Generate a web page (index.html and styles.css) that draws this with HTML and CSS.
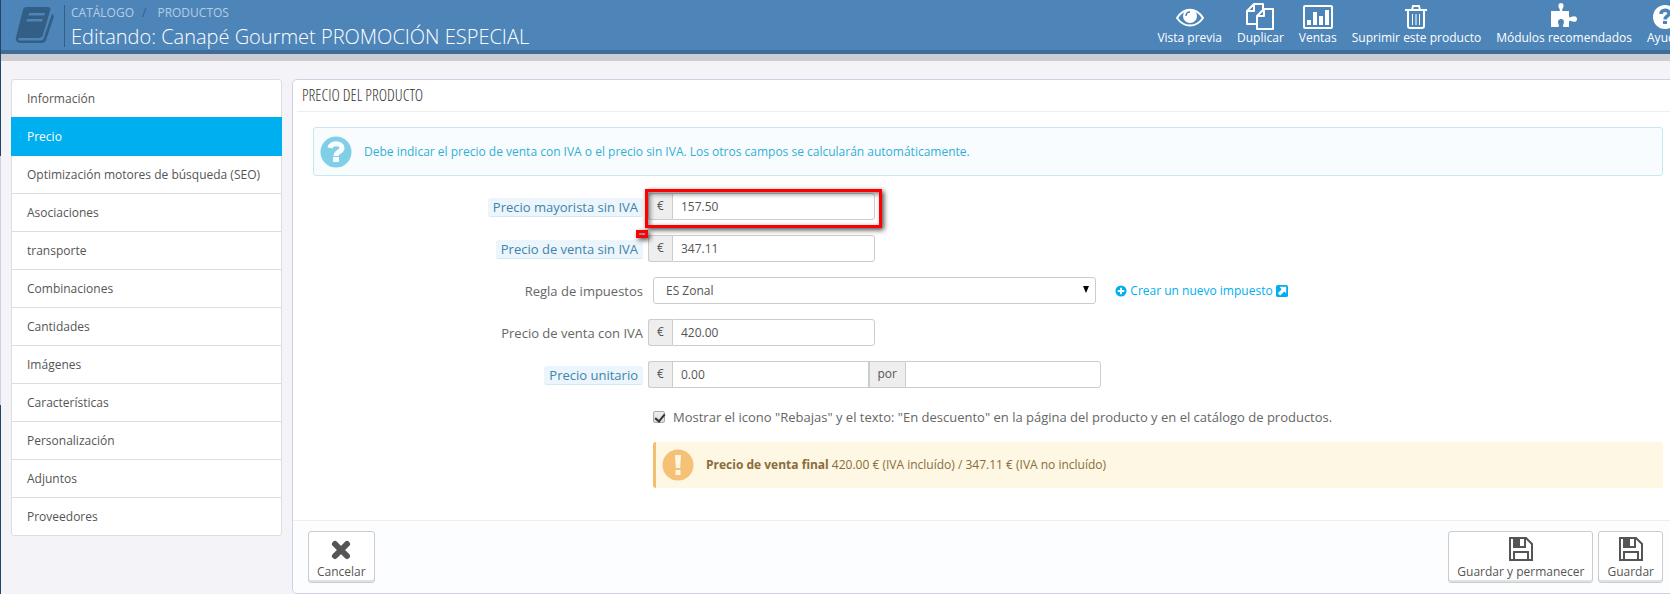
FILE: index.html
```
<!DOCTYPE html>
<html lang="es">
<head>
    <meta charset="UTF-8">
    <meta name="viewport" content="width=device-width, initial-scale=1.0">
    <title>Editando: Canapé Gourmet PROMOCIÓN ESPECIAL</title>
    <link rel="stylesheet" href="styles.css">
</head>
<body>
    <!-- Borde del menú principal -->
    <div class="nav-edge"></div>

    <div class="page">
        <header class="page-head">
            <svg class="page-icon" viewBox="0 0 37 38" preserveAspectRatio="none"><path fill="#335f87" fill-rule="evenodd" d="M11 1h20c2 0 3 1 2.500 3l-7 25c-.5 2-2 3-4 3H5c-2 0-2.500 2-1 2.500h20c2 0 3-1 3.500-3L35 8c2 1 2 2 1.500 4l-7 22c-.8 2-2 3-4 3H5c-3 0-5-3-4-6L7.500 4C8 2 9 1 11 1zm2.500 6l-.8 2.500h15l.8-2.500zm-2 6l-.8 2.500h15l.8-2.500z"/></svg>
            <div class="page-heading">
                <nav class="breadcrumb">
                    <a href="#">CATÁLOGO</a><span class="slash">/</span><a href="#">PRODUCTOS</a>
                </nav>
                <h1>Editando: Canapé Gourmet PROMOCIÓN ESPECIAL</h1>
            </div>
            <nav class="toolbar">
                <a href="#">
                    <svg viewBox="0 0 30 28"><path fill="none" stroke="#fff" stroke-width="2" d="M2 16C9 5 21 5 28 16C21 26 9 26 2 16z"/><circle cx="15" cy="14" r="7" fill="#fff"/><path fill="none" stroke="#4d85b9" stroke-width="1.500" d="M11 14c0-2.500 1.500-4 4-4"/></svg>
                    Vista previa
                </a>
                <a href="#">
                    <svg viewBox="0 0 30 28"><path fill="none" stroke="#fff" stroke-width="2" stroke-linejoin="round" d="M11 22H2V9l7-7h9v6M9 2v7H2M19 7h9v20H12V14zv7h-7"/></svg>
                    Duplicar
                </a>
                <a href="#">
                    <svg viewBox="0 0 30 28"><rect x="1" y="4" width="28" height="22" rx="1" fill="none" stroke="#fff" stroke-width="2"/><path fill="#fff" d="M4 18h4v5H4zM10 10h4v13h-4zM16 14h4v9h-4zM22 8h4v15h-4z"/></svg>
                    Ventas
                </a>
                <a href="#">
                    <svg viewBox="0 0 30 28"><path fill="none" stroke="#fff" stroke-width="2" d="M4 8h22M7 8v16q0 2 2 2h12q2 0 2-2V8M11 8l1-4h6l1 4"/><path stroke="#fff" stroke-width="1" d="M11.500 12v11M15 12v11M18.500 12v11"/></svg>
                    Suprimir este producto
                </a>
                <a href="#">
                    <svg viewBox="0 0 30 28"><path fill="#fff" d="M2 9h8c1 0 1.300-1 .6-2C8.500 4 9.500 1 12 1s3.500 3 1.400 6c-.7 1-.4 2 .6 2h6v5c0 1 1 2 2 1 3-1.500 6-1 6 2s-3 3.500-6 2c-1-.7-2 0-2 1v5h-5c-1 0-1.500-1-.8-2 1.800-4 0-6-2.200-6s-4 2-2.200 6c.7 1 0 2-1 2H2z"/></svg>
                    Módulos recomendados
                </a>
                <a href="#">
                    <svg viewBox="0 0 30 28"><circle cx="15" cy="15" r="12" fill="#fff"/><path fill="none" stroke="#4d85b9" stroke-width="3.500" d="M11 12c0-5 8-5 8-.5 0 3-4 2.500-4 6"/><path fill="#4d85b9" d="M13 19h4v3h-4z"/></svg>
                    Ayuda
                </a>
            </nav>
        </header>

        <div class="content">
            <nav class="side-menu">
                <a href="#">Información</a>
                <a href="#" class="active">Precio</a>
                <a href="#">Optimización motores de búsqueda (SEO)</a>
                <a href="#">Asociaciones</a>
                <a href="#">transporte</a>
                <a href="#">Combinaciones</a>
                <a href="#">Cantidades</a>
                <a href="#">Imágenes</a>
                <a href="#">Características</a>
                <a href="#">Personalización</a>
                <a href="#">Adjuntos</a>
                <a href="#">Proveedores</a>
            </nav>

            <form class="panel">
                <h3>PRECIO DEL PRODUCTO</h3>

                <div class="alert alert-info">
                    <svg viewBox="0 0 32 32"><circle cx="16" cy="16" r="15.500" fill="#81cfe6"/><path fill="none" stroke="#f8fcff" stroke-width="5" d="M10 12c1-6 12-5.500 12 0 0 4-6 3.500-6 8"/><path fill="#f8fcff" d="M13 21h6v5h-6z"/></svg>
                    <p>Debe indicar el precio de venta con IVA o el precio sin IVA. Los otros campos se calcularán automáticamente.</p>
                </div>

                <div class="row">
                    <label for="wholesale"><span class="hint">Precio mayorista sin IVA</span></label>
                    <div class="input-group marked">
                        <span class="addon">€</span><input type="text" id="wholesale" value="157.50">
                        <span class="mark"></span>
                        <span class="mark-small"></span>
                    </div>
                </div>
                <div class="row">
                    <label for="price"><span class="hint">Precio de venta sin IVA</span></label>
                    <div class="input-group">
                        <span class="addon">€</span><input type="text" id="price" value="347.11">
                    </div>
                </div>
                <div class="row">
                    <label for="tax">Regla de impuestos</label>
                    <div class="select-col">
                        <select id="tax"><option>ES Zonal</option></select>
                    </div>
                    <a href="#" class="new-tax">
                        <svg viewBox="0 0 13 13"><circle cx="6.500" cy="6.500" r="6" fill="#00aff0"/><path stroke="#fff" stroke-width="2" d="M6.500 3v7M3 6.500h7"/></svg>
                        Crear un nuevo impuesto
                        <svg viewBox="0 0 13 13"><rect x="0" y="0" width="13" height="13" rx="2" fill="#00aff0"/><path fill="#fff" d="M4 2h7v7L9 7l-4.500 4.500L2 9l4-4z"/></svg>
                    </a>
                </div>
                <div class="row">
                    <label for="price-tax">Precio de venta con IVA</label>
                    <div class="input-group">
                        <span class="addon">€</span><input type="text" id="price-tax" value="420.00">
                    </div>
                </div>
                <div class="row">
                    <label for="unit-price"><span class="hint">Precio unitario</span></label>
                    <div class="input-group wide">
                        <span class="addon">€</span><input type="text" id="unit-price" value="0.00"><span class="addon por">por</span><input type="text" aria-label="Unidad">
                    </div>
                </div>
                <div class="row">
                    <div class="check">
                        <input type="checkbox" id="on-sale" checked>
                        <label for="on-sale">Mostrar el icono "Rebajas" y el texto: "En descuento" en la página del producto y en el catálogo de productos.</label>
                    </div>
                </div>
                <div class="row">
                    <div class="alert alert-warning">
                        <svg viewBox="0 0 32 32"><circle cx="16" cy="16" r="15.500" fill="#f4c177"/><path fill="#fdf7e3" d="M13 6h6l-.8 13h-4.400zM13.500 21h5v5h-5z"/></svg>
                        <p><strong>Precio de venta final</strong> 420.00 € (IVA incluído) / 347.11 € (IVA no incluído)</p>
                    </div>
                </div>

                <div class="panel-footer">
                    <button type="button" class="cancel">
                        <svg viewBox="0 0 28 28"><path stroke="#555" stroke-width="6" stroke-linecap="round" d="M8 9l12 12M20 9L8 21"/></svg>
                        Cancelar
                    </button>
                    <button type="submit">
                        <svg viewBox="0 0 28 28"><path fill="none" stroke="#555" stroke-width="2" d="M3 3h16l6 6v16H3zM7 25v-8h14v8M7 3v9h11V3"/><path fill="#555" d="M7 3h6v8H7z"/></svg>
                        Guardar y permanecer
                    </button>
                    <button type="submit">
                        <svg viewBox="0 0 28 28"><path fill="none" stroke="#555" stroke-width="2" d="M3 3h16l6 6v16H3zM7 25v-8h14v8M7 3v9h11V3"/><path fill="#555" d="M7 3h6v8H7z"/></svg>
                        Guardar
                    </button>
                </div>
            </form>
        </div>
    </div>
</body>
</html>
```
FILE: styles.css
```
* {
    box-sizing: border-box;
}

body {
    margin: 0;
    display: flex;
    min-height: 100vh;
    overflow: hidden;
    background-color: #f4f3f8;
    color: #555;
    font-family: "Open Sans", sans-serif;
    font-size: 12px;
    line-height: 18px;
}

a {
    color: #00aff0;
    text-decoration: none;
}

.nav-edge {
    width: 1px;
    flex: none;
    background: linear-gradient(#21456b 156px, #d3d0e6 156px, #d3d0e6 405px, #21456b 405px);
}

.page {
    flex: 1;
    min-width: 0;
}

/* Cabecera */
.page-head {
    display: flex;
    height: 61px;
    background-color: #4d85b9;
    border-bottom: 7px solid #cecdd3;
    box-shadow: inset 0 -4px #3e6d98;
    color: #fff;
}

.page-icon {
    width: 39px;
    height: 38px;
    margin: 6px 10px 0 14px;
}

.page-heading {
    flex: 1;
    height: 42px;
    margin-top: 5px;
    padding-left: 6px;
    border-left: 1px solid #335f87;
    white-space: nowrap;
}

.breadcrumb {
    line-height: 16px;
}

.breadcrumb a {
    color: #b5cde3;
}

.slash {
    margin: 0 11px 0 8px;
    color: #335f87;
}

h1 {
    margin: 0;
    font-size: 20px;
    font-weight: 300;
    line-height: 32px;
}

.toolbar {
    display: flex;
    gap: 15px;
    margin-right: -12px;
}

.toolbar a {
    display: flex;
    flex-direction: column;
    align-items: center;
    padding-top: 2px;
    color: #fff;
    line-height: 16px;
    white-space: nowrap;
}

.toolbar svg {
    width: 30px;
    height: 28px;
}

/* Contenido */
.content {
    display: flex;
    align-items: flex-start;
    gap: 10px;
    margin: 18px -14px 0 10px;
}

.side-menu {
    width: 271px;
    flex: none;
    background-color: #fff;
    border: 1px solid #ddd;
    border-radius: 3px;
}

.side-menu a {
    display: block;
    height: 38px;
    padding: 0 15px;
    border-bottom: 1px solid #ddd;
    color: #555;
    line-height: 37px;
}

.side-menu a:last-child {
    height: 37px;
    border-bottom: none;
}

.side-menu .active {
    margin: -1px -1px 0;
    height: 39px;
    padding: 0 16px;
    background-color: #00aff0;
    border-color: #00aff0;
    color: #fff;
    line-height: 39px;
}

.panel {
    flex: 1;
    min-width: 0;
    background-color: #fff;
    border: 1px solid #d3d0e6;
    border-radius: 5px;
}

h3 {
    height: 32px;
    margin: 0 4px 15px;
    padding-left: 5px;
    border-bottom: 1px solid #eee;
    font-family: "Open Sans Condensed Light", "Open Sans Condensed", "Open Sans", sans-serif;
    font-size: 16px;
    font-weight: 400;
    line-height: 30px;
    color: #333;
}

.alert {
    display: flex;
    align-items: center;
    gap: 12px;
}

.alert svg {
    width: 32px;
    height: 32px;
    flex: none;
}

.alert p {
    margin: 0;
}

.alert-info {
    height: 49px;
    margin: 0 20px 17px;
    padding-left: 6px;
    background-color: #f8fcff;
    border: 1px solid #c5e9f3;
    border-radius: 3px;
    color: #31b0d5;
}

/* Filas del formulario */
.row {
    display: grid;
    grid-template-columns: repeat(12, 1fr);
    margin: 0 15px 15px;
    font-size: 13px;
}

.row > label {
    grid-column: span 3;
    padding: 4px 5px 0 0;
    text-align: right;
    line-height: 20px;
    color: #666;
}

.hint {
    display: inline-block;
    padding: 0 5px;
    background-color: #ebf5fb;
    border-bottom: 1px solid #d3eaf5;
    border-radius: 3px;
    color: #3e84ab;
    line-height: 18px;
}

.input-group {
    grid-column: span 2;
    display: flex;
    height: 27px;
}

.wide {
    grid-column: span 4;
}

.input-group input {
    flex: 1;
    width: 0;
    min-width: 0;
    padding: 0 8px;
    background-color: #fff;
    border: 1px solid #ccc;
    color: #555;
    font: 12px "Open Sans", sans-serif;
}

.input-group input:last-of-type {
    border-radius: 0 3px 3px 0;
}

.addon {
    width: 24px;
    background-color: #eee;
    border: 1px solid #ccc;
    border-right: none;
    border-radius: 3px 0 0 3px;
    font-size: 12px;
    line-height: 24px;
    text-align: center;
}

.por {
    width: 36px;
    border-radius: 0;
}

/* Recuadros rojos sobre el campo */
.marked {
    position: relative;
}

.mark,
.mark-small {
    position: absolute;
    border: 3px solid #f00;
    box-shadow: 2px 2px 5px rgba(0, 0, 0, 0.7), inset 2px 2px 5px rgba(0, 0, 0, 0.5);
    pointer-events: none;
}

.mark {
    top: -4px;
    right: -7px;
    bottom: -8px;
    left: -3px;
}

.mark-small {
    top: 37px;
    left: -12px;
    width: 12px;
    height: 8px;
}

.select-col {
    grid-column: span 4;
    padding: 0 5px;
    position: relative;
}

.select-col::after {
    content: "";
    position: absolute;
    top: 9px;
    right: 12px;
    border: 3px solid transparent;
    border-top: 7px solid #000;
    border-bottom: none;
}

select {
    display: block;
    width: 100%;
    height: 27px;
    padding: 0 12px;
    appearance: none;
    background-color: #fff;
    border: 1px solid #ccc;
    border-radius: 3px;
    color: #555;
    font: 12px "Open Sans", sans-serif;
}

.new-tax {
    grid-column: span 5;
    display: flex;
    align-items: center;
    gap: 3px;
    padding-left: 14px;
    font-size: 12px;
}

.new-tax svg {
    width: 12px;
    height: 12px;
}

.check {
    grid-column: 4 / -1;
    display: flex;
    align-items: center;
    gap: 8px;
    height: 27px;
    padding-left: 5px;
    color: #666;
}

.check input {
    appearance: none;
    width: 12px;
    height: 12px;
    margin: 0;
    background: linear-gradient(#eee, #ddd);
    border: 1px solid #aaa;
    border-radius: 2px;
    position: relative;
}

.check input:checked::after {
    content: "";
    position: absolute;
    top: 0;
    left: 3px;
    width: 4px;
    height: 8px;
    border: solid #333;
    border-width: 0 2px 2px 0;
    transform: rotate(40deg);
}

.alert-warning {
    grid-column: 4 / -1;
    height: 46px;
    margin: -3px 5px 17px;
    padding-left: 6px;
    background-color: #fdf7e3;
    border-left: 3px solid #f4bd70;
    border-radius: 3px;
    color: #8a6d3b;
    font-size: 12px;
}

/* Pie del panel */
.panel-footer {
    display: flex;
    gap: 5px;
    height: 73px;
    padding: 10px 20px 10px 15px;
    background-color: #fcfdfe;
    border-top: 1px solid #eee;
    border-radius: 0 0 5px 5px;
}

button {
    display: flex;
    flex-direction: column;
    align-items: center;
    height: 52px;
    padding: 3px 8px 0;
    background-color: #fff;
    border: 1px solid #ccc;
    border-radius: 3px;
    box-shadow: inset 0 -2px #e2e2e2;
    color: #555;
    font: 12px/18px "Open Sans", sans-serif;
}

button svg {
    width: 28px;
    height: 28px;
}

.cancel {
    margin-right: auto;
}
```
